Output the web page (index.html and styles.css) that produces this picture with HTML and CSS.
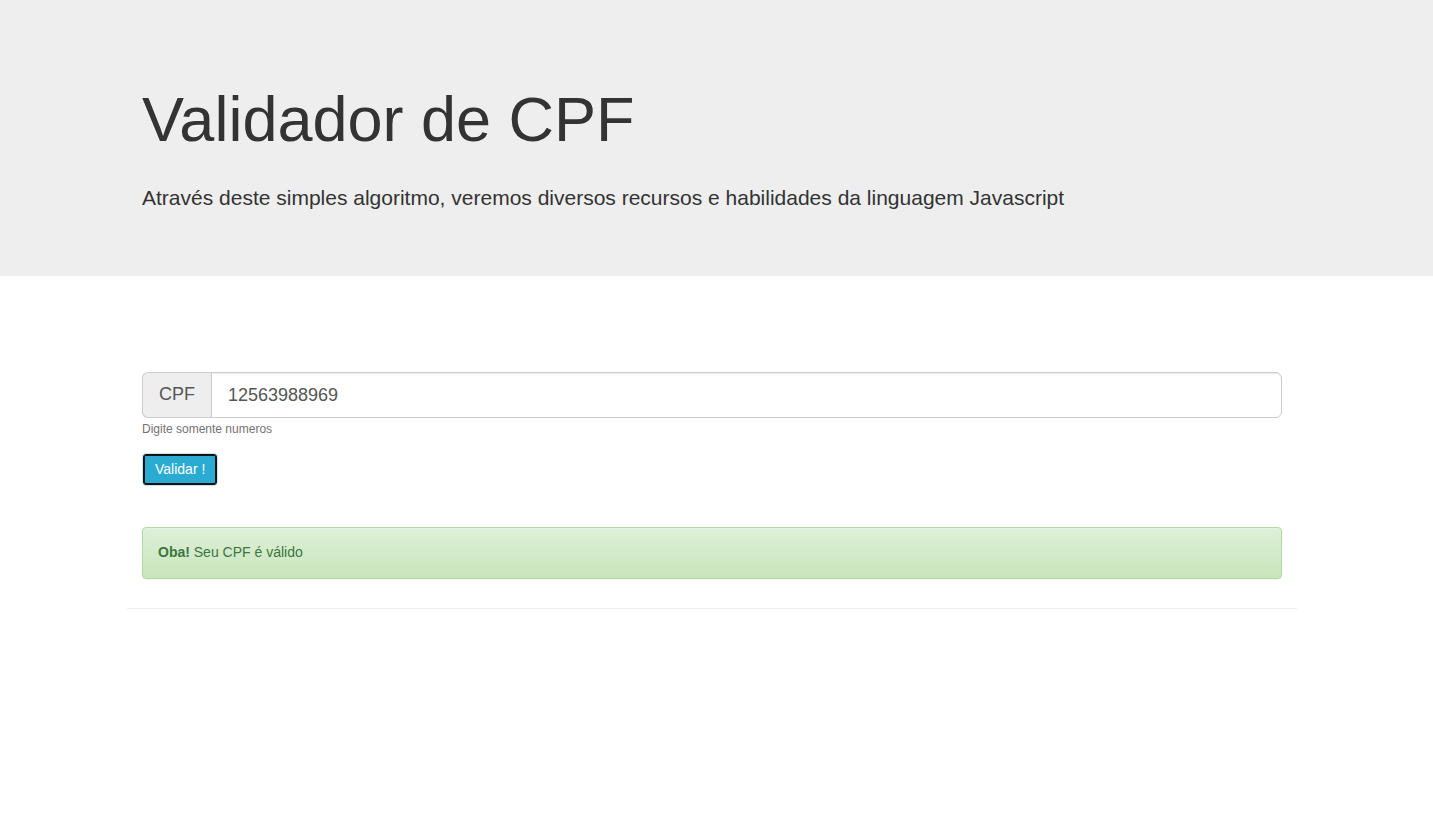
FILE: index.html
```html
<!DOCTYPE html>
<html lang="pt-BR">
<head>
<meta charset="utf-8">
<title>Validador de CPF</title>
<link rel="stylesheet" href="styles.css">
</head>
<body>
<header class="jumbotron">
  <div class="container">
    <h1 class="title">Validador de CPF</h1>
    <p class="lead">Através deste simples algoritmo, veremos diversos recursos e habilidades da linguagem Javascript</p>
  </div>
</header>
<main class="container main">
  <div class="input-group">
    <span class="addon">CPF</span>
    <input class="field" type="text" value="12563988969">
  </div>
  <small class="help">Digite somente numeros</small>
  <div class="actions">
    <button class="btn is-focused" type="button">Validar !</button>
  </div>
  <div class="alert"><strong>Oba!</strong> Seu CPF é válido</div>
</main>
<div class="container rule-wrap">
  <hr class="rule">
</div>
</body>
</html>
```

FILE: styles.css
```css
* { box-sizing: border-box; }
html, body { margin: 0; padding: 0; background: #fff; }
body {
  font-family: "Liberation Sans", Arial, Helvetica, sans-serif;
  font-size: 14px;
  line-height: 1.42857;
  color: #333;
}
.container {
  width: 1170px;
  margin-left: 127px;
  padding: 0 15px;
}
.jumbotron {
  background: #eee;
  padding: 48px 0;
}
.title {
  font-size: 63px;
  font-weight: 500;
  line-height: 69px;
  margin: 37px 0 29px;
  color: #333;
}
.lead {
  font-size: 21px;
  line-height: 30px;
  font-weight: 200;
  margin: 0 0 15px;
}
.main { padding-top: 96px; }
.input-group {
  display: flex;
  height: 46px;
}
.addon {
  display: flex;
  align-items: center;
  padding: 0 16px;
  font-size: 18px;
  color: #555;
  background: #eee;
  border: 1px solid #ccc;
  border-right: 0;
  border-radius: 6px 0 0 6px;
}
.field {
  flex: 1;
  min-width: 0;
  height: 46px;
  padding: 10px 16px;
  font-family: inherit;
  font-size: 18px;
  color: #555;
  background: #fff;
  border: 1px solid #ccc;
  border-radius: 0 6px 6px 0;
  box-shadow: inset 0 1px 1px rgba(0,0,0,.075);
  outline: none;
}
.help {
  display: block;
  margin-top: 3px;
  font-size: 12px;
  line-height: 16px;
  color: #737373;
}
.actions { margin-top: 17px; }
.btn {
  display: inline-block;
  height: 31px;
  padding: 4px 11px 5px;
  margin-left: 1px;
  font-family: inherit;
  font-size: 14px;
  line-height: 20px;
  color: #fff;
  background: #2aabd2;
  border: 1px solid #28a4c9;
  border-radius: 3px;
  cursor: pointer;
}
.btn.is-focused {
  border-color: #111;
  box-shadow: inset 0 0 0 1px #111, 0 0 0 1px #c9e6ef;
}
.alert {
  margin-top: 42px;
  padding: 15px;
  border: 1px solid #b2dba1;
  border-radius: 4px;
  color: #3c763d;
  background: linear-gradient(#dff0d8, #c8e5bc);
  box-shadow: inset 0 1px 0 rgba(255,255,255,.25), 0 1px 2px rgba(0,0,0,.05);
}
.alert strong { font-weight: 700; }
.rule-wrap { padding: 0; }
.rule {
  margin: 29px 0 0;
  border: 0;
  border-top: 1px solid #eee;
  height: 0;
}
```
